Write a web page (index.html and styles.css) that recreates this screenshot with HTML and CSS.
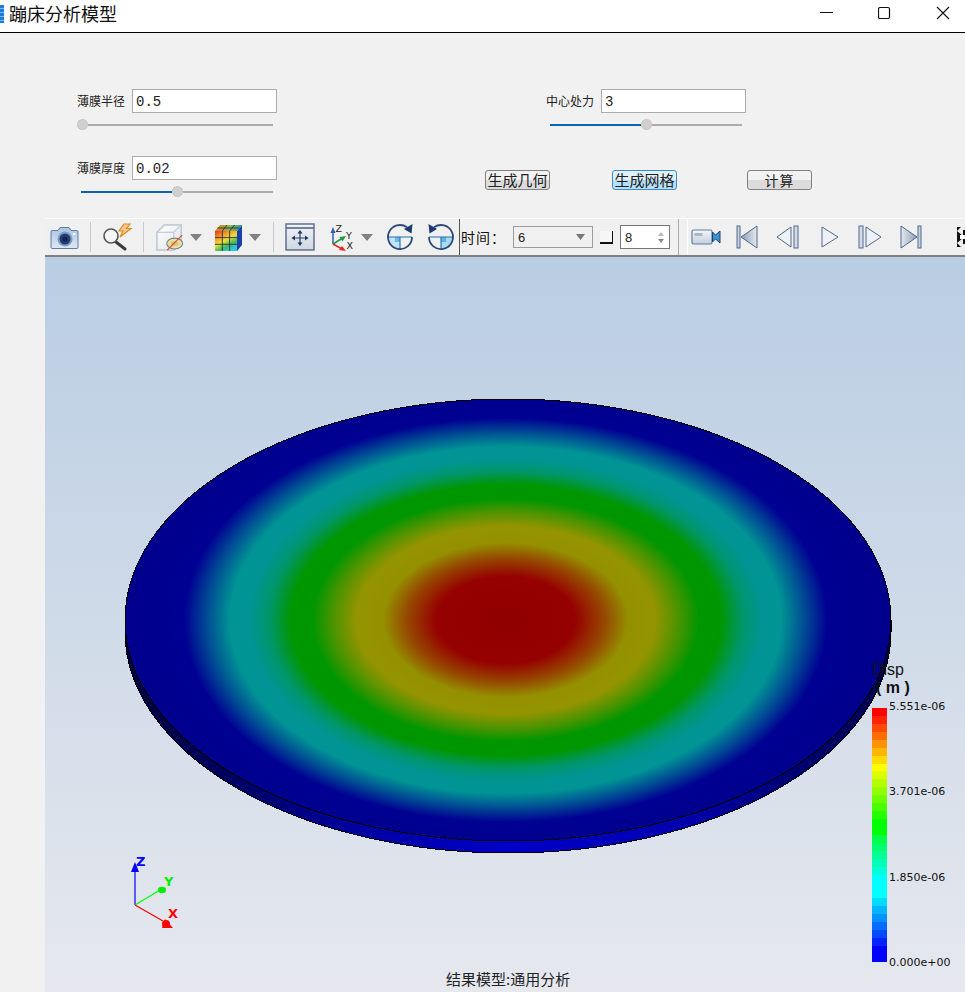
FILE: index.html
```html
<!DOCTYPE html>
<html lang="zh">
<head>
<meta charset="utf-8">
<title>蹦床分析模型</title>
<link rel="stylesheet" href="styles.css">
</head>
<body>
<div class="window">
  <header class="titlebar">
    <div class="app-icon"></div>
    <div class="app-title">蹦床分析模型</div>
    <div class="win-buttons">
      <svg class="win-btn" viewBox="0 0 14 14"><path d="M0 6.5H13" stroke="#111" fill="none"/></svg>
      <svg class="win-btn" viewBox="0 0 14 14"><rect x="0.5" y="1.5" width="11" height="11" rx="1.5" stroke="#111" stroke-width="1.2" fill="none"/></svg>
      <svg class="win-btn" viewBox="0 0 14 14"><path d="M1 1L13 13M13 1L1 13" stroke="#111" stroke-width="1.1" fill="none"/></svg>
    </div>
  </header>

  <section class="panel">
    <div class="col-left">
      <div class="field"><span class="label">薄膜半径</span><div class="input">0.5</div></div>
      <div class="slider s-zero"><span class="thumb"></span><span class="rest"></span></div>
      <div class="field f-second"><span class="label">薄膜厚度</span><div class="input">0.02</div></div>
      <div class="slider s-inset"><span class="fill"></span><span class="thumb"></span><span class="rest"></span></div>
    </div>
    <div class="col-right">
      <div class="field f-right"><span class="label">中心处力</span><div class="input">3</div></div>
      <div class="slider s-inset s-right"><span class="fill"></span><span class="thumb"></span><span class="rest"></span></div>
      <div class="buttons">
        <button class="btn">生成几何</button>
        <button class="btn btn-active">生成网格</button>
        <button class="btn btn-calc">计算</button>
      </div>
    </div>
  </section>

  <main class="workspace">
    <div class="toolbar">
      <div class="tools">
        <svg class="ico w29" viewBox="0 0 29 26"><defs><linearGradient id="cam" x1="0" y1="0" x2="0" y2="1"><stop offset="0" stop-color="#a9c4e2"/><stop offset="1" stop-color="#dfe8f2"/></linearGradient></defs><path d="M2 6.5H8L10 3.5H19L21 6.5H27Q28 6.5 28 8V23Q28 24.5 27 24.5H2Q1 24.5 1 23V8Q1 6.5 2 6.5Z" fill="url(#cam)" stroke="#5d7ea6"/><circle cx="15" cy="15" r="7.5" fill="#7f9dc0"/><circle cx="15" cy="15" r="5.5" fill="#1f3d78"/><circle cx="15" cy="15" r="2.6" fill="#16264f"/><rect x="23" y="9" width="2.5" height="2" fill="#fff"/></svg>
        <span class="sep"></span>
        <svg class="ico w30" viewBox="0 0 30 28"><path d="M14 19L23 26" stroke="#3a3a3a" stroke-width="3" stroke-linecap="round"/><circle cx="9" cy="13" r="7" fill="#f4f6f8" stroke="#555" stroke-width="1.6"/><path d="M22 1L17 8H21L18 14L29 5.500H24.500L28 1Z" fill="#f4c890" stroke="#e08a20" stroke-width="1.2"/></svg>
        <span class="sep"></span>
        <svg class="ico w30" viewBox="0 0 30 30"><defs><linearGradient id="boxf" x1="0" y1="0" x2="1" y2="1"><stop offset="0" stop-color="#fff"/><stop offset="1" stop-color="#dfe3e8"/></linearGradient></defs><path d="M1 10L9 2H27V21L19 29H1Z" fill="url(#boxf)" stroke="#c3ccd7" stroke-width="1.8"/><path d="M1 10H19V29M19 10L27 2" fill="none" stroke="#c3ccd7" stroke-width="1.4"/><ellipse cx="20" cy="22" rx="8.500" ry="5.800" fill="#ecdca0" stroke="#6e7f96" stroke-width="1.100"/><ellipse cx="20" cy="22" rx="4" ry="2.500" fill="#d9c27a"/><path d="M12 29L28 13" stroke="#d2502e" stroke-width="1.300"/></svg>
        <svg class="ico arrow g5" viewBox="0 0 12 7"><path d="M0 0H12L6 7Z" fill="#828282"/></svg>
        <svg class="ico w30 g12" viewBox="0 0 30 28"><defs><linearGradient id="cubef" x1="0" y1="0" x2="0.6" y2="1"><stop offset="0" stop-color="#e8342a"/><stop offset=".35" stop-color="#f5a623"/><stop offset=".55" stop-color="#e8e03a"/><stop offset=".8" stop-color="#3dbb5a"/><stop offset="1" stop-color="#2ec4dc"/></linearGradient><linearGradient id="cubet" x1="0" y1="0" x2="1" y2="0"><stop offset="0" stop-color="#e87a2a"/><stop offset=".55" stop-color="#8cb84c"/><stop offset="1" stop-color="#2a9a9c"/></linearGradient></defs><path d="M23 8L28 2V22L23 28Z" fill="#1a3fa8"/><path d="M1 8L6 2H28L23 8Z" fill="url(#cubet)"/><rect x="1" y="8" width="22" height="20" fill="url(#cubef)"/><path d="M8.300 8V28M15.600 8V28M1 14.600H23M1 21.300H23M8.300 8L13 2M15.600 8L20.500 2M3.500 5H25.500" stroke="#2a3040" stroke-width=".9" fill="none"/></svg>
        <svg class="ico arrow g5" viewBox="0 0 12 7"><path d="M0 0H12L6 7Z" fill="#828282"/></svg>
        <span class="sep g12"></span>
        <svg class="ico w30" viewBox="0 0 30 28"><defs><linearGradient id="fit" x1="0" y1="0" x2="0" y2="1"><stop offset="0" stop-color="#f0f3f7"/><stop offset="1" stop-color="#cfd6e0"/></linearGradient></defs><rect x="1" y="1" width="28" height="26" fill="url(#fit)" stroke="#56688a" stroke-width="1.4"/><path d="M1 5H29" stroke="#56688a" stroke-width="1.6"/><path d="M15 9V21M9 15H21" stroke="#28406e" stroke-width="1.2"/><path d="M15 7L12.500 10.500H17.500ZM15 23L12.500 19.500H17.500ZM6.500 15L10 12.500V17.500ZM23.500 15L20 12.500V17.500Z" fill="#1f3560"/></svg>
        <svg class="ico w27 g15" viewBox="0 0 27 28"><path d="M3 21V8" stroke="#2c5fb5" stroke-width="1.500"/><path d="M3 4L0.500 10H5.500Z" fill="#2c5fb5"/><path d="M3 21L12 15.500" stroke="#1c9a3c" stroke-width="1.500"/><path d="M16 13L9.500 14L12.500 18.500Z" fill="#1c9a3c"/><path d="M3 21L12 26" stroke="#e02a2a" stroke-width="1.500"/><path d="M16 28L9 27L12 23Z" fill="#e02a2a"/><text class="axis-mini" x="5.500" y="9">Z</text><text class="axis-mini" x="16" y="15.500">Y</text><text class="axis-mini" x="16.500" y="26">X</text></svg>
        <svg class="ico arrow g4" viewBox="0 0 12 7"><path d="M0 0H12L6 7Z" fill="#828282"/></svg>
        <svg class="ico w28 g13" viewBox="0 0 28 28"><path d="M14 14H2A12 12 0 0 0 14 26Z" fill="#c4e4f6"/><rect x="9" y="14" width="5" height="5" fill="#6db8e6"/><path d="M2 14H26M14 14V26" stroke="#1f6fb0" stroke-width="1.100"/><path d="M21 4.300A12 12 0 1 0 26 14" fill="none" stroke="#2b4a78" stroke-width="1.800"/><path d="M26.500 1L18 6L25.500 10.500Z" fill="#1c3a6e"/></svg>
        <svg class="ico w28 g13" viewBox="0 0 28 28"><path d="M14 14H26A12 12 0 0 1 14 26Z" fill="#a8d8f2"/><rect x="14" y="14" width="5" height="5" fill="#5fb2e2"/><path d="M2 14H26M14 14V26" stroke="#1f6fb0" stroke-width="1.100"/><path d="M7 4.300A12 12 0 1 1 2 14" fill="none" stroke="#2b4a78" stroke-width="1.800"/><path d="M1.500 1L10 6L2.500 10.500Z" fill="#1c3a6e"/></svg>
      </div>
      <div class="time">
        <span class="time-label">时间：</span>
        <div class="combo"><span>6</span><svg class="combo-arrow" viewBox="0 0 9 6"><path d="M0 0H9L4.500 6Z" fill="#777"/></svg></div>
        <span class="corner"></span>
        <div class="spin"><span>8</span><span class="spin-arrows"><i class="up"></i><i class="down"></i></span></div>
      </div>
      <div class="player">
        <svg class="ico w30" viewBox="0 0 30 18"><defs><linearGradient id="vid" x1="0" y1="0" x2="0" y2="1"><stop offset="0" stop-color="#f4f6f9"/><stop offset="1" stop-color="#c4cfdc"/></linearGradient></defs><rect x="1" y="2" width="20" height="14" rx="1.500" fill="url(#vid)" stroke="#5d7ea6" stroke-width="1.200"/><rect x="3.500" y="5" width="8" height="3" fill="#a9b6c6"/><path d="M21.500 4L24.500 7L29 3V15L24.500 11L21.500 14Z" fill="#3a94c8" stroke="#1f3f78"/></svg>
        <svg class="ico pl p22 g15" viewBox="0 0 22 24"><defs><linearGradient id="pg" x1="0" y1="0" x2="1" y2="0"><stop offset="0" stop-color="#8a9cb4"/><stop offset="1" stop-color="#e6eaf0"/></linearGradient></defs><rect x="1" y="1" width="3" height="22" fill="#c8d2de" stroke="#50698f"/><path d="M21 1V23L5 12Z" fill="url(#pg)" stroke="#50698f"/></svg>
        <svg class="ico pl p24 g18" viewBox="0 0 24 24"><path d="M15 2V22L1 12Z" fill="#eef1f5" stroke="#50698f"/><rect x="18" y="1" width="4" height="22" fill="#d4dce6" stroke="#50698f"/></svg>
        <svg class="ico pl p18 g21" viewBox="0 0 18 24"><path d="M1 2V22L17 12Z" fill="#eef1f5" stroke="#50698f"/></svg>
        <svg class="ico pl p24 g19" viewBox="0 0 24 24"><rect x="1" y="1" width="4" height="22" fill="#d4dce6" stroke="#50698f"/><path d="M8 2V22L23 12Z" fill="#eef1f5" stroke="#50698f"/></svg>
        <svg class="ico pl p22 g18" viewBox="0 0 22 24"><defs><linearGradient id="pg2" x1="0" y1="0" x2="1" y2="0"><stop offset="0" stop-color="#e6eaf0"/><stop offset="1" stop-color="#8a9cb4"/></linearGradient></defs><path d="M1 1V23L17 12Z" fill="url(#pg2)" stroke="#50698f"/><rect x="18" y="1" width="3" height="22" fill="#c8d2de" stroke="#50698f"/></svg>
        <svg class="ico full" viewBox="0 0 8 20"><rect width="8" height="20" fill="#111"/><path d="M0 4L6 9V3H8V0H4ZM0 16L6 11V17H8V20H4Z" fill="#eee"/><rect x="3" y="8" width="5" height="4" fill="#fff"/></svg>
      </div>
    </div>

    <div class="viewport">
      <svg class="scene" viewBox="45 257 920 735">
        <defs>
          <radialGradient id="contour" cx="0.497" cy="0.5" r="0.5" gradientTransform="translate(0 0.5) scale(1 1.09) translate(0 -0.5)">
            <stop offset="0" stop-color="#900000"/>
            <stop offset="0.18" stop-color="#960000"/>
            <stop offset="0.26" stop-color="#964a00"/>
            <stop offset="0.32" stop-color="#949000"/>
            <stop offset="0.39" stop-color="#949400"/>
            <stop offset="0.45" stop-color="#4c9400"/>
            <stop offset="0.505" stop-color="#009600"/>
            <stop offset="0.56" stop-color="#009600"/>
            <stop offset="0.62" stop-color="#00966c"/>
            <stop offset="0.67" stop-color="#009494"/>
            <stop offset="0.72" stop-color="#009494"/>
            <stop offset="0.78" stop-color="#004c94"/>
            <stop offset="0.84" stop-color="#000092"/>
            <stop offset="1" stop-color="#00008c"/>
          </radialGradient>
          <linearGradient id="side" x1="0" y1="0" x2="1" y2="0">
            <stop offset="0" stop-color="#00003c"/>
            <stop offset="0.12" stop-color="#00005c"/>
            <stop offset="0.3" stop-color="#0000a0"/>
            <stop offset="0.5" stop-color="#0000c8"/>
            <stop offset="0.72" stop-color="#0000b0"/>
            <stop offset="0.88" stop-color="#000070"/>
            <stop offset="1" stop-color="#00004c"/>
          </linearGradient>
        </defs>
        <path d="M125 620A383 221 0 0 0 891 620V632A383 221 0 0 1 125 632Z" fill="url(#side)" stroke="#000" stroke-width="1" shape-rendering="crispEdges"/>
        <ellipse cx="508" cy="620" rx="383" ry="221" fill="url(#contour)" stroke="#000" stroke-width="1" shape-rendering="crispEdges"/>
        <g>
          <path d="M135 905V868" stroke="#0000ff" stroke-width="1.200"/>
          <path d="M135 862L131 872H139Z" fill="#0000ff"/>
          <path d="M135 905L160 890" stroke="#00ff00" stroke-width="1.200"/>
          <ellipse cx="162" cy="890" rx="4" ry="3.200" fill="#00ee00"/>
          <path d="M135 905L163 921" stroke="#ff0000" stroke-width="1.200"/>
          <path d="M165 919L173 928H162Z" fill="#ff0000"/>
          <circle cx="166" cy="924" r="4" fill="#ff0000"/>
          <text class="axis z" x="136" y="866">Z</text>
          <text class="axis y" x="164" y="886">Y</text>
          <text class="axis x" x="168" y="918">X</text>
        </g>
      </svg>
      <div class="legend-title"><div>Disp</div><div class="unit">( m )</div></div>
      <div class="legend">
        <div class="legend-bar"></div>
        <div class="legend-labels"><span>5.551e-06</span><span>3.701e-06</span><span>1.850e-06</span><span>0.000e+00</span></div>
      </div>
      <div class="caption">结果模型:通用分析</div>
    </div>
  </main>
</div>
</body>
</html>
```

FILE: styles.css
```css
* { box-sizing: border-box; }
html, body { margin: 0; padding: 0; }
body {
  width: 965px;
  height: 992px;
  overflow: hidden;
  background: #f1f1f1;
  font-family: "Noto Sans CJK SC", "Liberation Sans", sans-serif;
  color: #111;
}
.window { display: flex; flex-direction: column; height: 992px; }

/* title bar */
.titlebar {
  flex: none;
  height: 33px;
  display: flex;
  align-items: center;
  background: #fff;
  border-bottom: 1px solid #000;
}
.app-icon {
  width: 4px;
  height: 18px;
  margin: -4px 5px 0 0;
  background: repeating-linear-gradient(#1f7ae0 0 3px, #7fb8f2 3px 4px);
}
.app-title { font-size: 18px; line-height: 26px; margin-top: -6px; width: 108px; }
.win-buttons {
  margin-left: auto;
  display: flex;
  gap: 44px;
  padding-right: 15px;
  margin-top: -6px;
}
.win-btn { width: 14px; height: 14px; display: block; }

/* form panel */
.panel {
  flex: none;
  height: 185px;
  padding: 56px 0 0 77px;
  display: flex;
}
.col-left { width: 408px; }
.col-right { width: 340px; }
.field { display: flex; align-items: center; height: 24px; }
.f-second { margin-top: 26px; }
.f-right { margin-left: 61px; }
.label { width: 55px; font-size: 12px; line-height: 26px; color: #222; }
.input {
  width: 145px;
  height: 24px;
  border: 1px solid #ababab;
  background: #fff;
  padding-left: 3px;
  font: 14px/25px "Liberation Mono", monospace;
  color: #222;
}

.slider { display: flex; align-items: center; height: 11px; width: 196px; margin-top: 6px; }
.s-zero { width: 196px; }
.s-inset { margin-left: 4px; width: 192px; }
.s-right { margin-left: 65px; }
.rest { flex: 1; height: 2px; background: #ababab; }
.fill { width: 91px; height: 2px; background: #0a64b8; }
.thumb {
  flex: none;
  width: 11px;
  height: 11px;
  border-radius: 50%;
  background: #cfcfcf;
  border: 1px dotted #bbb;
}

.buttons { display: flex; margin-top: 40px; }
.btn {
  width: 65px;
  height: 20px;
  padding: 0;
  border: 1px solid #808080;
  border-radius: 3px;
  background: linear-gradient(#f2f2f2 0 50%, #dcdcdc 50% 100%);
  font: 15px/18px "Noto Sans CJK SC", sans-serif;
  color: #222;
}
.btn + .btn { margin-left: 62px; }
.btn-active {
  border-color: #3a8ccf;
  background: linear-gradient(#e0f1fd 0 50%, #b7dff9 50% 100%);
}
.btn.btn-calc { margin-left: 70px; font-size: 14px; letter-spacing: 1px; }

/* workspace */
.workspace {
  flex: 1;
  margin-left: 45px;
  display: flex;
  flex-direction: column;
  min-height: 0;
}
.toolbar {
  flex: none;
  height: 39px;
  display: flex;
  background: #f0f0f0;
  border-top: 1px solid #fff;
  border-bottom: 2px solid #808080;
}
.ico { flex: none; display: block; overflow: visible; }
.w27 { width: 27px; height: 28px; }
.w28 { width: 28px; height: 28px; }
.w29 { width: 29px; height: 26px; }
.w30 { width: 30px; height: 28px; }
.arrow { width: 12px; height: 7px; }
.g4 { margin-left: 4px; }
.g5 { margin-left: 5px; }
.g12 { margin-left: 12px; }
.g13 { margin-left: 13px; }
.g15 { margin-left: 15px; }
.g18 { margin-left: 18px; }
.g19 { margin-left: 19px; }
.g21 { margin-left: 21px; }
.tools {
  width: 415px;
  display: flex;
  align-items: center;
  padding-left: 5px;
  border-right: 1px solid #555;
}
.sep { flex: none; width: 1px; height: 30px; background: #c8c8c8; margin: 0 11px; }
.sep.g12 { margin-left: 12px; }
.axis-mini { font: 9.500px "DejaVu Sans", sans-serif; fill: #222; }

.time {
  width: 219px;
  display: flex;
  align-items: center;
  padding-left: 1px;
  border-right: 1px solid #aaa;
  font-size: 14px;
}
.time-label { width: 52px; line-height: 20px; letter-spacing: 1px; color: #111; white-space: nowrap; }
.combo {
  width: 80px;
  height: 22px;
  display: flex;
  align-items: center;
  justify-content: space-between;
  padding: 0 7px 0 4px;
  border: 1px solid #9c9c9c;
  font: 13px "Liberation Sans", sans-serif;
  color: #222;
}
.combo-arrow { width: 9px; height: 6px; }
.corner {
  width: 13px;
  height: 13px;
  margin-left: 7px;
  background: #f6f6f6;
  border-right: 1px solid #111;
  border-bottom: 2px solid #111;
}
.spin {
  width: 50px;
  height: 24px;
  margin-left: 7px;
  padding: 0 5px 0 4px;
  display: flex;
  align-items: center;
  justify-content: space-between;
  background: #fff;
  border: 1px solid #777;
  font: 13px "Liberation Sans", sans-serif;
  color: #222;
}
.spin-arrows { display: flex; flex-direction: column; gap: 3px; }
.up, .down { display: block; width: 0; height: 0; border-left: 3px solid transparent; border-right: 3px solid transparent; }
.up { border-bottom: 4px solid #bbb; }
.down { border-top: 4px solid #888; }

.player {
  flex: 1;
  margin-left: 8px;
  margin-top: -1px;
  display: flex;
  align-items: center;
  padding-left: 3px;
  background: #f0f0f0;
  border-top: 1px solid #fff;
  border-left: 1px solid #fff;
  overflow: hidden;
}
.player .w30 { width: 30px; height: 18px; }
.pl { height: 24px; }
.p18 { width: 18px; }
.p22 { width: 22px; }
.p24 { width: 24px; }
.full { width: 8px; height: 20px; margin-left: 35px; }

/* 3D viewport */
.viewport {
  flex: 1;
  position: relative;
  overflow: hidden;
  background: linear-gradient(#b9cde3, #e6e8ee);
}
.scene { display: block; width: 920px; height: 735px; }
.axis { font: bold 13px "DejaVu Sans", sans-serif; }
.axis.z { fill: #0000ff; }
.axis.y { fill: #00f000; }
.axis.x { fill: #ff0000; }

.legend-title {
  position: absolute;
  left: 827px;
  top: 404px;
  font: 16px/18px "Liberation Sans", sans-serif;
  color: #111;
}
.unit { margin-left: 4px; font-weight: 700; }
.legend {
  position: absolute;
  left: 827px;
  top: 451px;
  height: 254px;
  display: flex;
}
.legend-bar {
  width: 15px;
  height: 254px;
  background: linear-gradient(
    #ff0000 0 3.125%, #ff2400 0 6.25%, #ff4900 0 9.375%, #ff6d00 0 12.5%,
    #ff9200 0 15.625%, #ffb600 0 18.75%, #ffdb00 0 21.875%, #ffff00 0 25%,
    #dbff00 0 28.125%, #b6ff00 0 31.25%, #92ff00 0 34.375%, #6dff00 0 37.5%,
    #49ff00 0 40.625%, #24ff00 0 43.75%, #00ff00 0 46.875%, #00ff00 0 50%,
    #00ff49 0 53.125%, #00ff6d 0 56.25%, #00ff92 0 59.375%, #00ffb6 0 62.5%,
    #00ffdb 0 65.625%, #00ffff 0 68.75%, #00ffff 0 71.875%, #00ffff 0 75%,
    #00dbff 0 78.125%, #00b6ff 0 81.25%, #0092ff 0 84.375%, #006dff 0 87.5%,
    #0049ff 0 90.625%, #0024ff 0 93.75%, #0000ff 0 96.875%, #0000ff 0 100%
  );
}
.legend-labels {
  margin: -7px 0 -7px 2px;
  display: flex;
  flex-direction: column;
  justify-content: space-between;
  font: 11px/12px "DejaVu Sans", sans-serif;
  color: #111;
}
.caption {
  position: absolute;
  left: 401px;
  top: 713px;
  font-size: 15px;
  line-height: 18px;
  color: #222;
}
```
